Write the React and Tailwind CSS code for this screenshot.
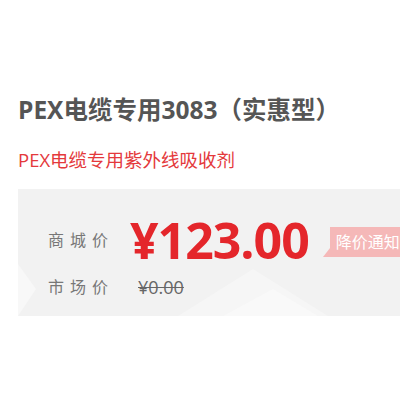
import React from 'react'

const font = { fontFamily: '"Open Sans", "Noto Sans CJK SC", sans-serif' }

export default function App() {
  return (
    <div className="w-[400px] h-[400px] bg-white overflow-hidden" style={font}>
      <div className="pt-[95px] pl-[18px]">
        {/* Title */}
        <h1 className="text-[24.5px] leading-[30px] font-bold text-[#555555] whitespace-nowrap">
          PEX电缆专用3083（实惠型）
        </h1>
        {/* Subtitle */}
        <p className="mt-[22px] text-[18.5px] leading-[26px] text-[#e4393c] whitespace-nowrap">
          PEX电缆专用紫外线吸收剂
        </p>

        {/* Price box */}
        <div className="relative mt-[16px] w-[400px] h-[127px] bg-[#f2f2f2] overflow-hidden">
          <svg className="absolute inset-0" width="400" height="127" viewBox="0 0 400 127">
            <polygon points="0,75 18,100 0,127" fill="#f8f8f8" />
            <polygon points="160,127 235,80 310,127" fill="#f6f6f6" />
            <polygon points="205,127 255,100 300,127" fill="#f9f9f9" />
          </svg>
          <div className="relative flex flex-col pl-[30px]">
            <div className="flex items-center h-[48px] mt-[27px]">
              <span className="text-[16px] tracking-[6px] text-[#777777] w-[82px]">商城价</span>
              <span className="text-[50px] leading-[48px] font-bold text-[#e4262b] tracking-[-1px]">¥123.00</span>
              <div className="relative ml-[21px] mt-[4px] h-[30px] bg-[#f5b8b8] pl-[6px] pr-2 flex items-center">
                <span className="absolute left-[-7px] bottom-0 w-0 h-0 border-t-[9px] border-t-transparent border-r-[7px] border-r-[#f5b8b8]" />
                <span className="text-[16px] text-white whitespace-nowrap">降价通知</span>
              </div>
            </div>
            <div className="flex items-center h-[24px] mt-[11px]">
              <span className="text-[16px] tracking-[6px] text-[#777777] w-[90px]">市场价</span>
              <span className="text-[18px] text-[#666666] line-through">¥0.00</span>
            </div>
          </div>
        </div>
      </div>
    </div>
  )
}
